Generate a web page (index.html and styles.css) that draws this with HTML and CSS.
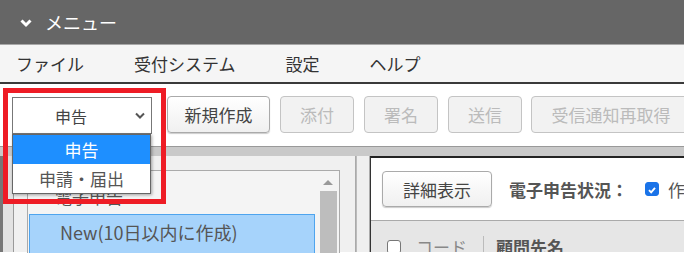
FILE: index.html
```html
<!DOCTYPE html>
<html lang="ja">
<head>
  <meta charset="UTF-8">
  <title>メニュー</title>
  <link rel="stylesheet" href="styles.css">
</head>
<body>
  <div class="titlebar">
    <svg class="chev" width="12" height="10" viewBox="0 0 12 10"><path d="M1.5 2.5 L6 7 L10.5 2.5" fill="none" stroke="#fff" stroke-width="3"/></svg>
    <span>メニュー</span>
  </div>

  <div class="menubar">
    <span>ファイル</span>
    <span>受付システム</span>
    <span>設定</span>
    <span>ヘルプ</span>
  </div>

  <div class="toolbar">
    <div class="select">
      <span>申告</span>
      <svg class="sel-arrow" width="10" height="7" viewBox="0 0 10 7"><path d="M1 1.5 L5 5.5 L9 1.5" fill="none" stroke="#555" stroke-width="2"/></svg>
    </div>
    <button class="btn">新規作成</button>
    <button class="btn" disabled>添付</button>
    <button class="btn" disabled>署名</button>
    <button class="btn" disabled>送信</button>
    <button class="btn wide" disabled>受信通知再取得</button>
  </div>

  <div class="band"></div>

  <div class="main">
    <div class="side-edge"></div>
    <div class="leftpane">
      <div class="listbox">
        <div class="listitems">
          <div class="item">電子申告</div>
          <div class="item selected">New(10日以内に作成)</div>
        </div>
        <div class="scrollbar">
          <div class="arrow-up"></div>
          <div class="track"></div>
        </div>
      </div>
    </div>
    <div class="splitter"></div>
    <div class="rightpane">
      <div class="rp-toolbar">
        <button class="btn detail">詳細表示</button>
        <span class="status">電子申告状況：</span>
        <span class="check on"><svg width="14" height="14" viewBox="0 0 14 14"><path d="M3.5 7.2 L6 9.7 L10.5 4.5" fill="none" stroke="#fff" stroke-width="2.2"/></svg></span>
        <span class="cut">作成中</span>
      </div>
      <div class="table-head">
        <span class="check"></span>
        <span class="col-code">コード</span>
        <span class="col-sep"></span>
        <span class="col-name">顧問先名</span>
      </div>
    </div>
  </div>

  <!-- open dropdown and the red highlight lie over the page -->
  <div class="dropdown">
    <div class="opt active">申告</div>
    <div class="opt">申請・届出</div>
  </div>
  <div class="highlight"></div>
</body>
</html>
```

FILE: styles.css
```css
body { margin: 0; font-family: "Noto Sans CJK JP", "Noto Sans", sans-serif; color: #444; overflow: hidden;
  width: 684px; height: 253px; position: relative; background: #fff; }

.titlebar { height: 45px; box-sizing: border-box; background: #666; border-bottom: 1px solid #a8a8a8; display: flex;
  align-items: center; padding-left: 20px; color: #fff; font-size: 18px; }
.titlebar .chev { margin-right: 13px; margin-top: 1px; }

.menubar { height: 37px; background: #f5f5f5; border-bottom: 2px solid #3a3a3a; display: flex; align-items: center;
  gap: 50px; padding-left: 16px; font-size: 17px; color: #333; }

.toolbar { height: 63px; border-bottom: 1px solid #999; display: flex; align-items: flex-start; padding: 12px 0 0 12px;
  box-sizing: border-box; }
.select { width: 140px; height: 37px; margin-top: 1px; box-sizing: border-box; border: 1px solid #777; background: #fff;
  display: flex; align-items: center; position: relative; font-size: 16px; color: #444; flex: none; }
.select span { flex: 1; text-align: center; margin-right: 22px; }
.sel-arrow { position: absolute; right: 6px; top: 14px; }

.btn { height: 37px; box-sizing: border-box; border: 1px solid #aaa; border-radius: 4px; font-family: inherit;
  font-size: 17px; color: #444; background: linear-gradient(#fff, #f0f0f0); box-shadow: 0 1px 1px #ccc;
  padding: 0; width: 74px; margin-left: 10px; flex: none; }
.toolbar .btn:first-of-type { margin-left: 15px; width: 103px; }
.btn:disabled { color: #bbb; background: #f2f2f2; border-color: #c4c4c4; box-shadow: none; }
.btn.wide { width: 160px; margin-left: 9px; }

.band { height: 9px; background: #c9c9c9; }

.main { display: flex; height: 96px; }
.side-edge { flex: none; width: 13px; background: linear-gradient(to right, #777 0 3px, #e2e2e2 3px);
  border-right: 1px solid #999; }
.leftpane { flex: none; width: 342px; box-sizing: border-box; background: #f0f0f0; border-right: 1px solid #aaa;
  padding: 14px 15px 0 13px; }
.listbox { height: 100%; border: 1px solid #aaa; border-bottom: none; display: flex; background: #f4f4f4; }
.listitems { flex: 1; padding: 1px 2px 0 1px; }
.item { height: 42px; padding: 15px 0 0 26px; box-sizing: border-box; font-size: 17px; color: #555; line-height: 20px; }
.item.selected { height: 40px; background: #a6d3fb; border: 1px solid #4ea4ee; padding: 5px 0 0 30px; font-size: 18px;
  line-height: 24px; color: #555; white-space: nowrap; }
.scrollbar { width: 22px; display: flex; flex-direction: column; align-items: center; }
.arrow-up { margin-top: 9px; width: 0; height: 0; border-left: 5px solid transparent; border-right: 5px solid transparent;
  border-bottom: 5px solid #999; }
.track { margin-top: 6px; width: 17px; flex: 1; background: #bdbdbd; }

.splitter { flex: none; width: 12px; background: #efefef; border-left: 1px solid #bbb; border-right: 1px solid #aaa; }

.rightpane { flex: 1; min-width: 0; border-top: 2px solid #222; border-left: 1px solid #333; display: flex;
  flex-direction: column; }
.rp-toolbar { height: 62px; flex: none; border-bottom: 1px solid #aaa; display: flex; align-items: center; padding-left: 11px;
  white-space: nowrap; overflow: hidden; }
.btn.detail { width: 110px; height: 36px; margin: 0 17px 0 0; }
.status { font-size: 17px; font-weight: bold; color: #555; margin-right: 17px; }
.check { width: 14px; height: 14px; box-sizing: border-box; border-radius: 3px; border: 1px solid #777; background: #fff;
  display: inline-flex; flex: none; }
.check.on { background: #1a73e8; border-color: #1a73e8; margin-right: 9px; }
.cut { font-size: 17px; color: #555; }

.table-head { flex: 1; background: #e6e6e6; display: flex; align-items: flex-start; padding: 15px 0 0 16px;
  font-size: 17px; white-space: nowrap; overflow: hidden; }
.table-head .check { margin-top: 4px; }
.col-code { color: #888; margin-left: 15px; line-height: 22px; }
.col-sep { width: 1px; height: 22px; background: #bbb; margin: 0 12px 0 16px; }
.col-name { font-weight: bold; color: #555; line-height: 22px; }

.dropdown { position: absolute; left: 12px; top: 134px; width: 139px; border: 1px solid #666; background: #fff;
  box-shadow: 1px 1px 3px rgba(0, 0, 0, 0.35); box-sizing: border-box; }
.opt { height: 29px; line-height: 29px; text-align: center; font-size: 17px; color: #555; }
.opt.active { background: #1e8fff; color: #fff; }

.highlight { position: absolute; left: 3px; top: 88px; width: 163px; height: 116px; box-sizing: border-box;
  border: 5px solid #ee1c25; }
```
